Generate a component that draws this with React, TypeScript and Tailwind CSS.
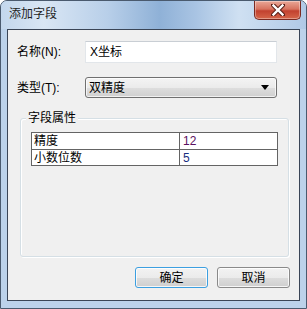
const ui = { fontFamily: '"Liberation Sans", "Noto Sans CJK SC", sans-serif' }

function CloseButton() {
  return (
    <div className="flex h-[19px] w-[47px] items-center justify-center rounded-b-[5px] border border-t-0 border-[#7a2a22] bg-[linear-gradient(to_bottom,#e9a797_0%,#d7735f_45%,#c2412f_55%,#d5664a_100%)] shadow-[inset_0_0_0_1px_rgba(255,255,255,0.35)]">
      <svg width="14" height="12" viewBox="0 0 14 12">
        <path d="M2 1 L12 11 M12 1 L2 11" stroke="#5a2018" strokeWidth="4.4" strokeLinecap="square" />
        <path d="M2.5 1.5 L11.5 10.5 M11.5 1.5 L2.5 10.5" stroke="#ffffff" strokeWidth="2.4" strokeLinecap="square" />
      </svg>
    </div>
  )
}

function WinButton({ label, focused }: { label: string; focused?: boolean }) {
  return (
    <div
      className={
        "flex h-[21px] w-[73px] items-center justify-center rounded-[3px] border text-[12px] leading-none text-black shadow-[inset_0_0_0_1px_rgba(255,255,255,0.8)] " +
        (focused
          ? "border-[#3c9fe0] bg-[linear-gradient(to_bottom,#f2f2f2_0%,#ebebeb_50%,#dddddd_51%,#cfcfcf_100%)]"
          : "border-[#8a8a8a] bg-[linear-gradient(to_bottom,#f2f2f2_0%,#ebebeb_50%,#dddddd_51%,#cfcfcf_100%)]")
      }
    >
      {label}
    </div>
  )
}

export default function App() {
  const rows = [
    { name: "精度", value: "12", color: "text-[#5a1060]" },
    { name: "小数位数", value: "5", color: "text-[#1a2f80]" },
  ]

  return (
    <div className="h-[309px] w-[307px] bg-white" style={ui}>
      <div className="flex h-[309px] w-[307px] flex-col overflow-hidden rounded-t-[7px] border border-[#4a5a6e] bg-[#bcd2ea]">
        {/* title bar */}
        <div className="flex h-[28px] shrink-0 items-start justify-between bg-[linear-gradient(to_right,#c3d7ed_0%,#d9e6f4_14%,#b8cfe9_35%,#8fb1d7_52%,#a9c4e3_64%,#cfe0f2_78%,#b0c9e6_100%)] pl-[8px] pr-[5px]">
          <span className="mt-[6px] text-[12px] leading-[14px] text-[#1e1e1e]">添加字段</span>
          <CloseButton />
        </div>

        {/* body */}
        <div className="flex flex-1 px-[6px] pb-[7px]">
          <div className="flex flex-1 flex-col border border-[#3a4556] bg-[#f0f0f0] text-[12px] text-black">
            {/* name */}
            <div className="mt-[11px] flex items-center pl-[9px]">
              <span className="w-[68px] leading-[14px]">名称(N):</span>
              <div className="flex h-[22px] w-[192px] items-center border border-[#e2e6ea] border-t-[#c9ced4] bg-white pl-[4px] leading-[14px]">
                X坐标
              </div>
            </div>

            {/* type */}
            <div className="mt-[14px] flex items-center pl-[9px]">
              <span className="w-[68px] leading-[14px]">类型(T):</span>
              <div className="flex h-[21px] w-[192px] items-center justify-between rounded-[3px] border border-[#707070] bg-[linear-gradient(to_bottom,#f4f4f4_0%,#ebebeb_50%,#dedede_51%,#d0d0d0_100%)] pl-[3px] pr-[7px] leading-[14px] shadow-[inset_0_0_0_1px_rgba(255,255,255,0.7)]">
                <span>双精度</span>
                <svg width="8" height="5" viewBox="0 0 8 5">
                  <path d="M0 0 H8 L4 5 Z" fill="#000" />
                </svg>
              </div>
            </div>

            {/* group box */}
            <div className="relative ml-[12px] mt-[20px] h-[139px] w-[269px] rounded-[3px] border border-[#d5dfe5] shadow-[inset_1px_1px_0_#ffffff,1px_1px_0_#ffffff]">
              <span className="absolute left-[5px] top-[-8px] bg-[#f0f0f0] px-[2px] leading-[14px]">字段属性</span>
              <div className="ml-[10px] mt-[13px] w-[247px] border border-[#646464] bg-white">
                {rows.map((r, i) => (
                  <div key={r.name} className={"flex h-[16px] items-center " + (i > 0 ? "border-t border-[#646464]" : "")}>
                    <div className="flex h-full w-[148px] items-center border-r border-[#646464] pl-[2px] leading-[14px]">{r.name}</div>
                    <div className={"pl-[3px] leading-[14px] " + r.color}>{r.value}</div>
                  </div>
                ))}
              </div>
            </div>

            {/* buttons */}
            <div className="mt-[10px] flex gap-[9px] pl-[127px]">
              <WinButton label="确定" focused />
              <WinButton label="取消" />
            </div>
          </div>
        </div>
      </div>
    </div>
  )
}
